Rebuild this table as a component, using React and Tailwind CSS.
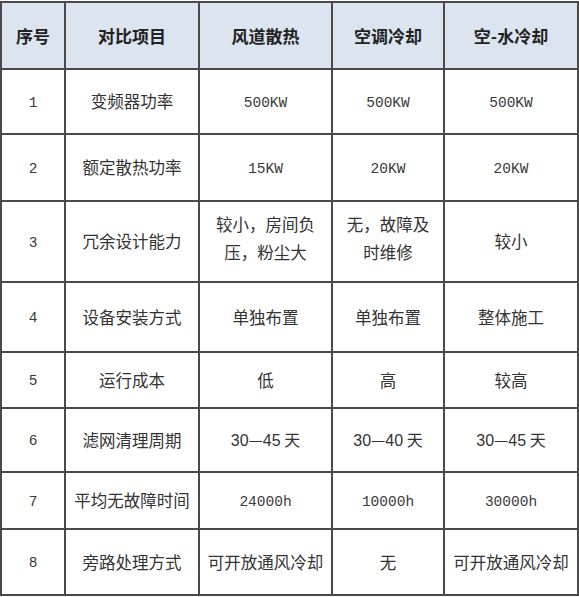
import React from 'react';

const cjk = { fontFamily: '"Noto Sans CJK SC", sans-serif' };

const rows = [
  { no: '1', item: '变频器功率', h: 65, cells: [{ t: '500KW', mono: true }, { t: '500KW', mono: true }, { t: '500KW', mono: true }] },
  { no: '2', item: '额定散热功率', h: 67, cells: [{ t: '15KW', mono: true }, { t: '20KW', mono: true }, { t: '20KW', mono: true }] },
  { no: '3', item: '冗余设计能力', h: 81, cells: [{ lines: ['较小，房间负', '压，粉尘大'] }, { lines: ['无，故障及', '时维修'] }, { t: '较小' }] },
  { no: '4', item: '设备安装方式', h: 70, cells: [{ t: '单独布置' }, { t: '单独布置' }, { t: '整体施工' }] },
  { no: '5', item: '运行成本', h: 56, cells: [{ t: '低' }, { t: '高' }, { t: '较高' }] },
  { no: '6', item: '滤网清理周期', h: 64, cells: [{ range: ['30', '45'] }, { range: ['30', '40'] }, { range: ['30', '45'] }] },
  { no: '7', item: '平均无故障时间', h: 57, cells: [{ t: '24000h', mono: true }, { t: '10000h', mono: true }, { t: '30000h', mono: true }] },
  { no: '8', item: '旁路处理方式', h: 66, cells: [{ t: '可开放通风冷却' }, { t: '无' }, { t: '可开放通风冷却' }] },
];

const td = 'border-2 border-[#4a4a4a] text-center align-middle p-0';

function Cell({ c }) {
  if (c.mono) {
    return <span className="text-[14.5px] font-['Liberation_Mono',monospace] text-[#3a3a3a]">{c.t}</span>;
  }
  if (c.range) {
    return (
      <span className="text-[16px] text-[#333] whitespace-nowrap" style={cjk}>
        <span className="font-['Liberation_Sans',sans-serif]">{c.range[0]}</span>—<span className="font-['Liberation_Sans',sans-serif]">{c.range[1]}</span> 天
      </span>
    );
  }
  if (c.lines) {
    return (
      <div className="text-[16.5px] leading-[28px] text-[#333] pb-[8px]" style={cjk}>
        {c.lines.map((l) => (
          <div key={l}>{l}</div>
        ))}
      </div>
    );
  }
  return <span className="text-[16.5px] text-[#333] whitespace-nowrap" style={cjk}>{c.t}</span>;
}

export default function App() {
  return (
    <div className="w-[579px] h-[597px] bg-white pt-[1px]">
      <table className="border-collapse table-fixed w-[577px]">
        <colgroup>
          <col className="w-[64px]" />
          <col className="w-[134px]" />
          <col className="w-[133px]" />
          <col className="w-[112px]" />
          <col className="w-[134px]" />
        </colgroup>
        <thead>
          <tr className="h-[67px] bg-[#dce4f0]">
            {['序号', '对比项目', '风道散热', '空调冷却', '空-水冷却'].map((h) => (
              <th key={h} className={`${td} text-[17px] font-bold text-[#222]`} style={cjk}>
                {h}
              </th>
            ))}
          </tr>
        </thead>
        <tbody>
          {rows.map((r) => (
            <tr key={r.no} style={{ height: r.h }}>
              <td className={td}>
                <span className="text-[14.5px] font-['Liberation_Mono',monospace] text-[#3a3a3a]">{r.no}</span>
              </td>
              <td className={td}>
                <span className="text-[16.5px] text-[#333] whitespace-nowrap" style={cjk}>{r.item}</span>
              </td>
              {r.cells.map((c, i) => (
                <td key={i} className={td}>
                  <Cell c={c} />
                </td>
              ))}
            </tr>
          ))}
        </tbody>
      </table>
    </div>
  );
}
